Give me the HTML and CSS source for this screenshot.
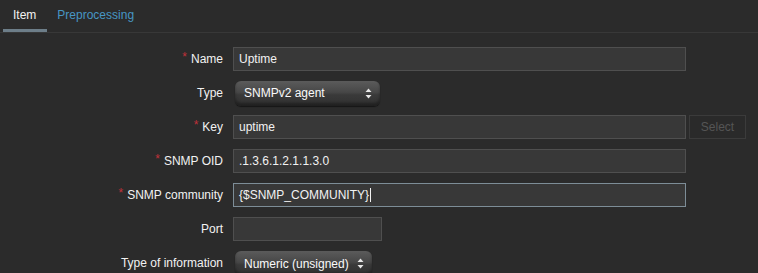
FILE: index.html
```html
<!DOCTYPE html>
<html>

<head>
  <link rel="stylesheet" href="styles.css">
</head>

<body>

<ul class="tabs">
  <li class="tab is-active">Item</li>
  <li class="tab">Preprocessing</li>
</ul>

<form class="item-form">
  <label class="form-label required" for="name">Name</label>
  <div class="form-field">
    <input class="form-input wide" id="name" type="text" value="Uptime"/>
  </div>

  <label class="form-label" for="type">Type</label>
  <div class="form-field">
    <div class="form-select type-select" id="type">
      <span>SNMPv2 agent</span>
      <svg class="select-arrows" width="7" height="11" viewBox="0 0 7 11"><path d="M3.5 0.5 L6.5 4 L0.5 4 Z M3.5 10.5 L6.5 7 L0.5 7 Z" fill="#e8e8e8"/></svg>
    </div>
  </div>

  <label class="form-label required" for="key">Key</label>
  <div class="form-field">
    <input class="form-input wide" id="key" type="text" value="uptime"/>
    <button class="btn-select" type="button" disabled>Select</button>
  </div>

  <label class="form-label required" for="oid">SNMP OID</label>
  <div class="form-field">
    <input class="form-input wide" id="oid" type="text" value=".1.3.6.1.2.1.1.3.0"/>
  </div>

  <label class="form-label required" for="community">SNMP community</label>
  <div class="form-field">
    <div class="form-input wide is-focused" id="community">{$SNMP_COMMUNITY}<span class="caret"></span></div>
  </div>

  <label class="form-label" for="port">Port</label>
  <div class="form-field">
    <input class="form-input narrow" id="port" type="text" value=""/>
  </div>

  <label class="form-label" for="value_type">Type of information</label>
  <div class="form-field">
    <div class="form-select info-select" id="value_type">
      <span>Numeric (unsigned)</span>
      <svg class="select-arrows" width="7" height="11" viewBox="0 0 7 11"><path d="M3.5 0.5 L6.5 4 L0.5 4 Z M3.5 10.5 L6.5 7 L0.5 7 Z" fill="#e8e8e8"/></svg>
    </div>
  </div>
</form>

</body>

</html>
```

FILE: styles.css
```css
html, body {
  height: 100%;
}

body {
  margin: 0;
  background-color: #2b2b2b;
  color: #f2f2f2;
  font-family: "Liberation Sans", Arial, sans-serif;
  font-size: 12px;
  overflow: hidden;
}

.tabs {
  display: flex;
  margin: 0;
  padding: 0 0 0 3px;
  list-style: none;
  border-bottom: 1px solid #383838;
}

.tab {
  height: 29px;
  padding: 0 11px 0 10px;
  line-height: 31px;
  border-bottom: 3px solid transparent;
  color: #4796c4;
}

.tab.is-active {
  color: #f2f2f2;
  border-bottom-color: #6d7e89;
}

.item-form {
  display: grid;
  grid-template-columns: 223px 1fr;
  column-gap: 10px;
  row-gap: 10px;
  padding-top: 14px;
}

.form-label {
  height: 24px;
  line-height: 24px;
  text-align: right;
  white-space: nowrap;
}

.form-label.required::before {
  content: "*";
  color: #c0313a;
  margin-right: 4px;
  position: relative;
  top: -2px;
}

.form-field {
  display: flex;
  align-items: center;
  gap: 3px;
  height: 24px;
}

.form-input {
  box-sizing: border-box;
  height: 24px;
  margin: 0;
  padding: 0 5px;
  background-color: #383838;
  border: 1px solid #4f4f4f;
  color: #f2f2f2;
  font: inherit;
  line-height: 22px;
  outline: none;
}

.form-input.wide {
  width: 453px;
}

.form-input.narrow {
  width: 149px;
}

.form-input.is-focused {
  border-color: #7d8d97;
}

.caret {
  display: inline-block;
  width: 1px;
  height: 14px;
  margin-left: 1px;
  vertical-align: -3px;
  background-color: #f2f2f2;
}

.btn-select {
  box-sizing: border-box;
  width: 57px;
  height: 24px;
  margin: 0;
  padding: 0;
  background-color: #2a2a2a;
  border: 1px solid #3b3b3b;
  color: #555;
  font: inherit;
}

.form-select {
  box-sizing: border-box;
  display: flex;
  align-items: center;
  justify-content: space-between;
  height: 25px;
  margin-left: 2px;
  padding: 0 8px 0 9px;
  border-radius: 6px;
  background: linear-gradient(to bottom, #5b5b5b 0%, #474747 45%, #3a3a3a 55%, #303030 100%);
  box-shadow: inset 0 -3px 3px rgba(0, 0, 0, 0.35), 0 1px 1px rgba(0, 0, 0, 0.5);
  color: #fafafa;
  font-size: 12px;
  white-space: nowrap;
}

.type-select {
  width: 145px;
}

.info-select {
  width: 137px;
  margin-top: 1px;
}
```
